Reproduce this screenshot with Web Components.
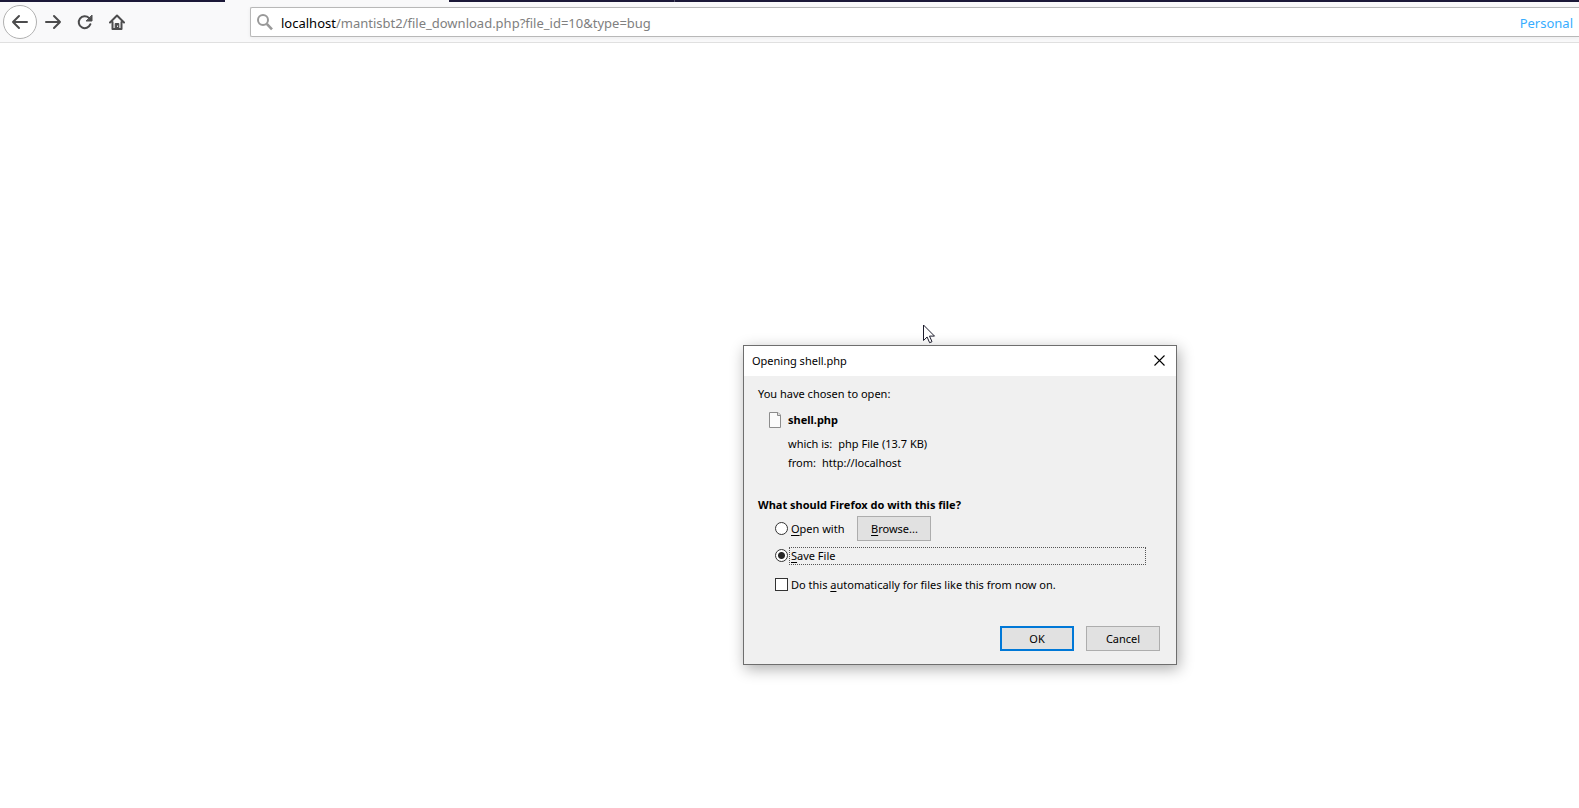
<!DOCTYPE html>
<html lang="en">
<head>
<meta charset="utf-8">
<title>Opening shell.php</title>
<style>
  html, body { height: 100%; }
  body {
    margin: 0;
    background: #fff;
    color: #000;
    font: 11px/16px "Noto Sans", "Open Sans", sans-serif;
    overflow: hidden;
  }
</style>
</head>
<body>

<browser-window>
  <tab-strip slot="tabs"></tab-strip>
  <nav-bar slot="nav">
    <nav-button name="Back" icon="back" round></nav-button>
    <nav-button name="Forward" icon="forward"></nav-button>
    <nav-button name="Reload" icon="reload"></nav-button>
    <nav-button name="Home" icon="home"></nav-button>
    <url-bar slot="url" host="localhost" path="/mantisbt2/file_download.php?file_id=10&amp;type=bug">Personal</url-bar>
  </nav-bar>
  <dialog-window heading="Opening shell.php">
    <file-info name="shell.php" kind="php File (13.7 KB)" from="http://localhost">You have chosen to open:</file-info>
    <file-action>What should Firefox do with this file?</file-action>
    <push-button slot="buttons" primary>OK</push-button>
    <push-button slot="buttons">Cancel</push-button>
  </dialog-window>
  <mouse-pointer></mouse-pointer>
</browser-window>

<template id="browser-window">
  <style>
    :host { display: flex; flex-direction: column; height: 100%; position: relative; }
    main { flex: 1; background: #fff; }
  </style>
  <slot name="tabs"></slot>
  <slot name="nav"></slot>
  <main><slot></slot></main>
</template>

<template id="tab-strip">
  <style>
    :host { display: flex; height: 2px; background: #1b1838; }
    i { flex: 0 0 225px; }
    .active { background: #f9f9fa; flex-basis: 224px; }
    .last { border-right: 1px solid #55536b; }
  </style>
  <i></i><i class="active"></i><i class="last"></i>
</template>

<template id="nav-bar">
  <style>
    :host {
      display: flex;
      align-items: center;
      box-sizing: border-box;
      height: 41px;
      padding-left: 3px;
      background: #f9f9fa;
      border-bottom: 1px solid #e0e0e0;
    }
    .buttons { display: flex; align-items: center; flex: 0 0 247px; }
    slot[name] { display: block; flex: 1; }
  </style>
  <div class="buttons"><slot></slot></div>
  <slot name="url"></slot>
</template>

<template id="nav-button">
  <style>
    :host { display: block; }
    button {
      display: grid;
      place-items: center;
      box-sizing: border-box;
      width: 32px;
      height: 34px;
      padding: 0;
      border: 0;
      background: none;
    }
    :host([round]) button {
      width: 34px;
      border: 1px solid #b1b1b1;
      border-radius: 50%;
      background: #fff;
    }
    svg { display: block; fill: none; stroke: #4c4c4d; stroke-width: 2; stroke-linecap: round; stroke-linejoin: round; }
  </style>
  <button type="button"></button>
</template>

<template id="url-bar">
  <style>
    :host { display: block; font-size: 13px; line-height: 20px; }
    .box {
      display: flex;
      align-items: center;
      box-sizing: border-box;
      height: 30px;
      padding: 0 6px;
      border: 1px solid #b8b8b8;
      border-right: 0;
      border-radius: 2px 0 0 2px;
      background: #fff;
      box-shadow: 0 1px 4px rgba(0, 0, 0, .06);
    }
    svg { flex: none; margin-right: 8px; }
    .field { display: grid; flex: 1; align-items: center; }
    .field > * { grid-area: 1 / 1; }
    .field, .container { padding-top: 2px; }
    input { width: 100%; padding: 0; border: 0; outline: 0; background: none; font: inherit; color: #000; }
    .pretty { color: #808080; pointer-events: none; white-space: nowrap; }
    .pretty b { font-weight: normal; color: #000; }
    input:focus + .pretty { visibility: hidden; }
    .container { color: #37adff; }
  </style>
  <div class="box">
    <svg width="16" height="17" viewBox="0 0 16 17" fill="none" stroke="#999" aria-hidden="true">
      <circle cx="6" cy="6" r="5" stroke-width="2"/>
      <path d="M9.8 9.8 15 15.4" stroke-width="2.6"/>
    </svg>
    <div class="field">
      <input type="text" aria-label="Address">
      <span class="pretty"><b></b><span></span></span>
    </div>
    <span class="container"><slot></slot></span>
  </div>
</template>

<template id="dialog-window">
  <style>
    :host {
      position: absolute;
      left: 743px;
      top: 345px;
      box-sizing: border-box;
      width: 434px;
      border: 1px solid #6e6e6e;
      background: #f0f0f0;
      box-shadow: 2px 4px 14px rgba(0, 0, 0, .32);
    }
    header {
      display: flex;
      align-items: center;
      justify-content: space-between;
      height: 30px;
      padding: 0 8px;
      background: #fff;
    }
    h1 { margin: 0; font: inherit; }
    header button { display: grid; place-items: start; width: 14px; height: 12px; padding: 0; border: 0; background: none; }
    .content { padding: 10px 14px 0; }
    footer { display: flex; justify-content: flex-end; gap: 12px; padding: 32px 16px 13px; }
  </style>
  <header>
    <h1></h1>
    <button type="button" aria-label="Close">
      <svg width="11" height="11" viewBox="0 0 11 11" stroke="#000" stroke-width="1.1"><path d="M.5.5l10 10M10.500.5l-10 10"/></svg>
    </button>
  </header>
  <div class="content"><slot></slot></div>
  <footer><slot name="buttons"></slot></footer>
</template>

<template id="file-info">
  <style>
    :host { display: block; }
    .file { display: flex; align-items: center; height: 18px; margin-top: 9px; padding-left: 11px; gap: 6px; font-weight: bold; }
    svg { display: block; }
    dl { margin: 5px 0 0 30px; }
    .row { display: flex; gap: 6px; height: 19px; line-height: 19px; }
    dt, dd { margin: 0; }
  </style>
  <div><slot></slot></div>
  <div class="file">
    <svg width="13" height="16" viewBox="0 0 13 16" aria-hidden="true">
      <path d="M.5.5h8.500l2.500 2.500v12.500H.5z" fill="#fbfbfb" stroke="#8c8c8c"/>
      <path d="M8.500.5v3h3" fill="#dedede" stroke="#8c8c8c"/>
    </svg>
    <span class="name"></span>
  </div>
  <dl>
    <div class="row"><dt>which is:</dt><dd class="kind"></dd></div>
    <div class="row"><dt>from:</dt><dd class="from"></dd></div>
  </dl>
</template>

<template id="file-action">
  <style>
    :host { display: block; margin-top: 25px; }
    fieldset { min-width: 0; margin: 0; padding: 0; border: 0; }
    legend { padding: 0; font-weight: bold; }
    .row { display: flex; align-items: center; gap: 1px; padding: 0 16px 0 17px; }
    label { padding: 0 1px; border: 1px solid transparent; }
    .open { height: 25px; margin-top: 3px; }
    .open push-button { margin-left: 10px; }
    .save { height: 19px; margin-top: 5px; }
    .save label { flex: 1; border: 1px dotted #555; }
    .auto { height: 19px; margin-top: 10px; }
    u { text-underline-offset: 2px; }
    input {
      appearance: none;
      flex: none;
      box-sizing: border-box;
      width: 13px;
      height: 13px;
      margin: 0;
      border: 1px solid #333;
      background: #fff;
    }
    input[type=radio] { border-radius: 50%; }
    input[type=radio]:checked { background: radial-gradient(circle, #262626 3px, #fff 4px); }
    input[type=checkbox]:checked { background: #333 content-box; padding: 2px; }
  </style>
  <fieldset>
    <legend><slot></slot></legend>
    <div class="row open">
      <input type="radio" name="action" id="open">
      <label for="open"><u>O</u>pen with</label>
      <push-button><u>B</u>rowse...</push-button>
    </div>
    <div class="row save">
      <input type="radio" name="action" id="save" checked>
      <label for="save"><u>S</u>ave File</label>
    </div>
  </fieldset>
  <div class="row auto">
    <input type="checkbox" id="auto">
    <label for="auto">Do this <u>a</u>utomatically for files like this from now on.</label>
  </div>
</template>

<template id="push-button">
  <style>
    :host { display: block; }
    button {
      box-sizing: border-box;
      width: 74px;
      height: 25px;
      padding: 0;
      border: 1px solid #adadad;
      background: #e1e1e1;
      color: inherit;
      font: inherit;
    }
    :host([primary]) button { border: 2px solid #0078d7; }
  </style>
  <button type="button"><slot></slot></button>
</template>

<template id="mouse-pointer">
  <style>
    :host { position: absolute; left: 923px; top: 324px; pointer-events: none; }
    svg { display: block; }
  </style>
  <svg width="13" height="20" viewBox="0 0 13 20" aria-hidden="true">
    <path d="M.5 1v15.500l3.600-3.500 2.500 5.700 2.400-1-2.500-5.600h5z" fill="#fff" stroke="#1c1c2c"/>
  </svg>
</template>

<script>
const icons = {
  back: '<svg width="18" height="16" viewBox="0 0 18 16"><path d="M16 8H2M8 2 2 8l6 6"/></svg>',
  forward: '<svg width="18" height="16" viewBox="0 0 18 16"><path d="M2 8h14M10 2l6 6-6 6"/></svg>',
  reload: '<svg width="16" height="16" viewBox="0 0 16 16"><path d="M13.400 10.200A6 6 0 1 1 12 3.900"/><path d="M15 1.500v5.500H9.500z" fill="#4c4c4d" stroke-width="1"/></svg>',
  home: '<svg width="16" height="16" viewBox="0 0 16 16"><path d="M1 8.500 8 1.500l7 7M3.500 8v7h9V8"/><path d="M6.200 15V9.500h3.600V15z" fill="#4c4c4d" stroke-width="1"/><path d="M8.500 12v.5" stroke="#f9f9fa" stroke-width="1"/></svg>'
};

// Base class: clones the template with the same name as the tag
class TemplateElement extends HTMLElement {
  constructor() {
    super();
    const tmpl = document.getElementById(this.localName);
    this.attachShadow({mode: 'open'}).append(tmpl.content.cloneNode(true));
  }

  $(selector) {
    return this.shadowRoot.querySelector(selector);
  }
}

for (const tag of ['browser-window', 'tab-strip', 'nav-bar', 'push-button', 'file-action', 'mouse-pointer']) {
  customElements.define(tag, class extends TemplateElement {});
}

customElements.define('nav-button', class extends TemplateElement {
  connectedCallback() {
    const button = this.$('button');
    button.setAttribute('aria-label', this.getAttribute('name'));
    button.innerHTML = icons[this.getAttribute('icon')];
  }
});

customElements.define('url-bar', class extends TemplateElement {
  connectedCallback() {
    const host = this.getAttribute('host');
    const path = this.getAttribute('path');
    this.$('.pretty b').textContent = host;
    this.$('.pretty span').textContent = path;

    // the plain address is editable, the two-tone one is shown otherwise
    const input = this.$('input');
    input.onfocus = () => { input.value = host + path; input.select(); };
    input.onblur = () => { input.value = ''; };
  }
});

customElements.define('dialog-window', class extends TemplateElement {
  connectedCallback() {
    this.$('h1').textContent = this.getAttribute('heading');
    this.$('header button').onclick = () => this.remove();
  }
});

customElements.define('file-info', class extends TemplateElement {
  connectedCallback() {
    for (const key of ['name', 'kind', 'from']) {
      this.$('.' + key).textContent = this.getAttribute(key);
    }
  }
});
</script>
</body>
</html>
